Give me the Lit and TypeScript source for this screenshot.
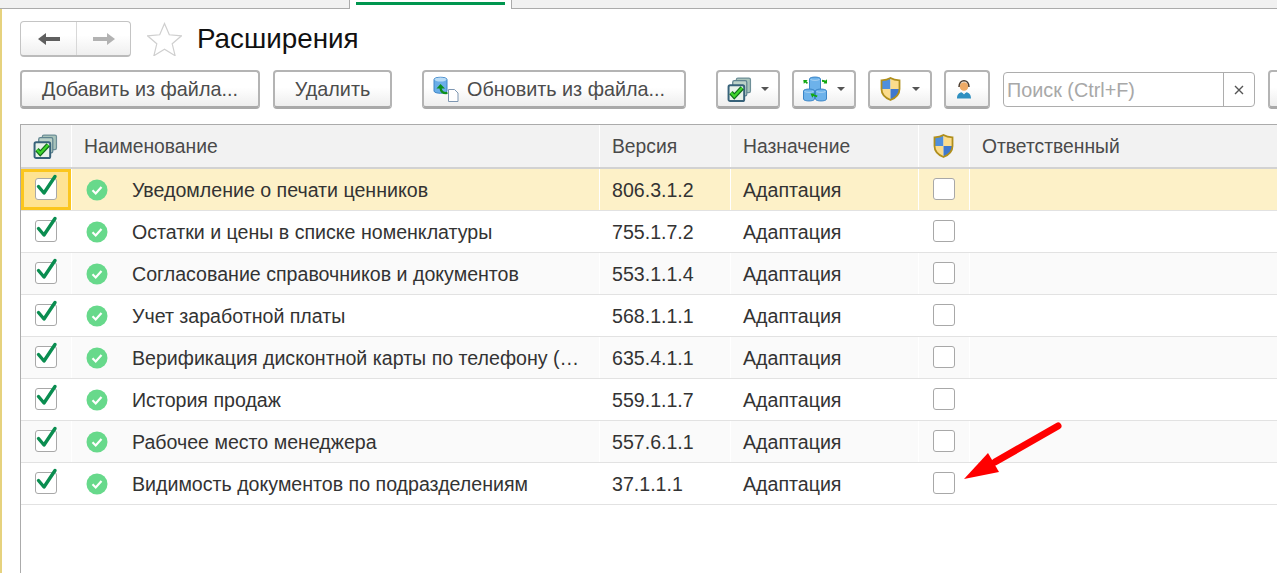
import { LitElement, html, css } from "lit";
import { customElement } from "lit/decorators.js";

const caret = html`<span class="caret"></span>`;

const stackIcon = (s = 25) => html`<svg width=${s} height=${s} viewBox="0 0 24 24">
  <rect x="9" y="1" width="13.500" height="14" rx="1.500" fill="#a9c4bb" stroke="#6e8f98" stroke-width="1.200"/>
  <rect x="5.500" y="3.500" width="13.500" height="14.500" rx="1.500" fill="#bcd2c8" stroke="#5f8490" stroke-width="1.200"/>
  <rect x="1.500" y="8" width="15" height="15" rx="1.500" fill="#e8f2ea" stroke="#37627a" stroke-width="1.900"/>
  <path d="M3.800 15l3.200 3.600 7.600-8.200" fill="none" stroke="#0f6d1a" stroke-width="4.400"/>
  <path d="M3.800 15l3.200 3.600 7.600-8.200" fill="none" stroke="#3fd52c" stroke-width="2.200"/>
</svg>`;

const shieldPath = "M10.500 1C7.500 3 4.500 3.300 1.500 3.300V12c0 5 3.500 8.800 9 11 5.500-2.200 9-6 9-11V3.300C16.500 3.300 13.500 3 10.500 1z";
const shieldIcon = (id: string) => html`<svg width="21" height="24" viewBox="0 0 21 24">
  <defs><clipPath id=${id}><path d=${shieldPath}/></clipPath></defs>
  <g clip-path="url(#${id})">
    <rect width="10.500" height="12" fill="#4f8fdc"/><rect x="10.500" width="10.500" height="12" fill="#fbdc8c"/>
    <rect y="12" width="10.500" height="12" fill="#fbdc8c"/><rect x="10.500" y="12" width="10.500" height="12" fill="#3f78cf"/>
  </g>
  <path d=${shieldPath} fill="none" stroke="#b08f1c" stroke-width="1.800"/>
</svg>`;

const dbIcon = html`<svg width="25" height="26" viewBox="0 0 25 26">
  <g fill="#6db2ea" stroke="#3c86c8" stroke-width="1">
    <path d="M6.500 3c0-2.600 11-2.600 11 0v10c0 2.600-11 2.600-11 0z"/>
    <path d="M.5 15c0-2.600 11-2.600 11 0v8c0 2.600-11 2.600-11 0z"/>
    <path d="M12.500 15c0-2.600 11-2.600 11 0v8c0 2.600-11 2.600-11 0z"/>
  </g>
  <g fill="none" stroke="#fff" stroke-width=".8" opacity=".55">
    <path d="M7.500 3.500c2 1.100 7 1.100 9 0M1.500 15.500c2 1.100 7 1.100 9 0M13.500 15.500c2 1.100 7 1.100 9 0"/>
  </g>
  <g fill="#12a812">
    <path d="M.3 4h4.400L3.400 5.300l1.600 1.500-1.100 1.100-1.600-1.500L.8 7.800z"/>
    <path d="M24 7.500V3.300l-1.400 1.300-3.600-.8v2l2.300.5-.7 1.200z"/>
    <path d="M7.500 17.500h4.300l-.9 1 3.600 1.100-.6 1.600-3.500-1.200-1.100 1.700z"/>
  </g>
</svg>`;

const personIcon = html`<svg class="person" width="16" height="20" viewBox="0 0 16 20">
  <path d="M1 19.500c0-4 1.700-5.500 4.500-6.300L8 15l2.500-1.800c2.800.8 4.500 2.300 4.500 6.300z" fill="#2e8fc0"/>
  <path d="M6.500 12.500h3L8 15.500z" fill="#f4f4f4"/>
  <circle cx="8" cy="7.500" r="4.300" fill="#eeaa66"/>
  <path d="M3 8c0-8.500 10-8.500 10 0" fill="none" stroke="#4a3a2c" stroke-width="1.500"/>
</svg>`;

const updateIcon = html`<svg width="26" height="26" viewBox="0 0 26 26">
  <path d="M1 3.500C1 .5 14 .5 14 3.500v11.500c0 3-13 3-13 0z" fill="#6aaee8" stroke="#3f86c8"/>
  <ellipse cx="7.500" cy="3.500" rx="6" ry="2" fill="#b9dcf6"/>
  <path d="M15.500 13.500h6l3.500 3.500v8.500h-9.500z" fill="#fff" stroke="#7e97b2"/>
  <path d="M14.500 17c-4 .5-6.500-1-7-5" fill="none" stroke="#0c8f1c" stroke-width="2.200"/>
  <path d="M3.500 12.500l4-4.500 4.500 4.500z" fill="#0c8f1c"/>
</svg>`;

const checkMark = html`<svg class="tick" width="26" height="26" viewBox="0 0 26 26">
  <path d="M4.500 14.500l5.500 6.500L21 4.500" fill="none" stroke="#0a8d50" stroke-width="3.400" stroke-linecap="round" stroke-linejoin="round"/>
</svg>`;

const statusIcon = html`<svg class="status" width="22" height="22" viewBox="0 0 22 22">
  <circle cx="11" cy="11" r="10.500" fill="#67d98b"/>
  <path d="M6.500 11.300l3.200 3.200 5.800-6.500" fill="none" stroke="#fff" stroke-width="2.200"/>
</svg>`;

const rows = [
  ["Уведомление о печати ценников", "806.3.1.2"],
  ["Остатки и цены в списке номенклатуры", "755.1.7.2"],
  ["Согласование справочников и документов", "553.1.1.4"],
  ["Учет заработной платы", "568.1.1.1"],
  ["Верификация дисконтной карты по телефону (…", "635.4.1.1"],
  ["История продаж", "559.1.1.7"],
  ["Рабочее место менеджера", "557.6.1.1"],
  ["Видимость документов по подразделениям", "37.1.1.1"],
];

@customElement("app-root")
export class AppRoot extends LitElement {
  static styles = css`
    :host {
      display: block;
      position: relative;
      width: 1277px;
      height: 573px;
      overflow: hidden;
      background: #fff;
      font-family: "Liberation Sans", Arial, sans-serif;
      color: #333;
    }
    * { box-sizing: border-box; }
    .tabs {
      height: 9px;
      background: #f1f1f1;
      border-bottom: 1px solid #ababab;
      padding-left: 349px;
    }
    .tab {
      width: 163px;
      height: 9px;
      background: #fff;
      border: 1px solid #ababab;
      border-width: 0 1px;
      padding: 2px 6px 0 6px;
    }
    .tab i { display: block; height: 3px; background: #00964f; }
    .main {
      height: 564px;
      border-left: 2px solid #e6d27e;
      padding: 12px 0 0 18px;
      display: flex;
      flex-direction: column;
    }
    .head { display: flex; align-items: center; height: 36px; }
    .nav {
      width: 111px;
      height: 36px;
      border: 1px solid #c4c4c4;
      border-bottom: 2px solid #bbb;
      border-radius: 4px;
      background: linear-gradient(#fff 40%, #efefef);
      display: flex;
    }
    .nav span { flex: 1; display: flex; align-items: center; justify-content: center; padding-top: 1px; }
    .nav span:first-child { border-right: 1px solid #d8d8d8; width: 56px; flex: none; }
    .star { margin: 0 15px 0 16px; display: block; }
    h1 { margin: 0; font-size: 27.800px; font-weight: 400; color: #111; }
    .toolbar { display: flex; align-items: flex-start; margin-top: 13px; height: 40px; }
    .btn {
      height: 39px;
      border: 2px solid #b4b4b4;
      border-bottom: 3px solid #a9a9a9;
      border-radius: 4px;
      background: linear-gradient(#fff 45%, #eeeeee);
      display: flex;
      align-items: center;
      justify-content: center;
      font-size: 19.800px;
      color: #4c4c4c;
      flex: none;
    }
    .btn.add { width: 240px; }
    .btn.del { width: 119px; margin-left: 13px; }
    .btn.upd { width: 264px; margin-left: 30px; justify-content: flex-start; padding-left: 9px; gap: 8px; }
    .btn.ic { width: 64px; gap: 9px; justify-content: flex-start; padding-left: 9px; }
    .btn.ic.first { margin-left: 30px; }
    .btn.ic.next { margin-left: 12px; }
    .btn.ic.shield { padding-left: 10px; gap: 11px; }
    .btn.solo { width: 46px; margin-left: 12px; justify-content: flex-start; padding-left: 10px; }
    .caret { width: 0; height: 0; border: 4px solid transparent; border-top: 4px solid #555; border-bottom: 0; }
    .search {
      width: 252px;
      height: 35px;
      margin: 2px 0 0 13px;
      border: 1px solid #adadad;
      border-radius: 4px;
      display: flex;
      flex: none;
      font-size: 19.800px;
      background: #fff;
    }
    .search .ph { flex: 1; color: #a8a8a8; padding-left: 3px; line-height: 34px; }
    .search .x { width: 31px; border-left: 1px solid #adadad; display: flex; align-items: center; justify-content: center; }
    .btn.tail { width: 46px; margin-left: 13px; }
    .table { margin-top: 14px; width: 1257px; border-left: 1px solid #ababab; flex: 1; }
    .hdr, .row {
      display: grid;
      grid-template-columns: 51px 528px 131px 188px 51px 1fr;
    }
    .hdr {
      height: 45px;
      background: #f2f2f2;
      border-top: 1px solid #ababab;
      border-bottom: 2px solid #d2d2d2;
      font-size: 19.300px;
      color: #4a4a4a;
    }
    .hdr > div {
      border-right: 1px solid #fff;
      display: flex;
      align-items: center;
      padding: 2px 0 0 12px;
    }
    .hdr > div:last-child { border-right: 0; }
    .hdr > div.ctr { justify-content: center; padding: 0 1px 0 0; }
    .row {
      height: 42px;
      border-bottom: 1px solid #e2e2e2;
      font-size: 19.600px;
      color: #333;
    }
    .row.alt { background: #fafafa; }
    .row.cur { background: #fdf1c8; }
    .row > div { border-right: 1px solid #fff; display: flex; align-items: center; padding: 1px 0 0 12px; white-space: nowrap; overflow: hidden; }
    .row > div:last-child { border-right: 0; }
    .row:not(.cur):not(.alt) > div { border-right-color: transparent; }
    .row > div.name { padding-left: 14px; gap: 24px; }
    .row > div.chk { padding: 9px 0 0 14px; position: relative; overflow: visible; align-items: flex-start; }
    .row.cur > div.chk { background: #fee393; box-shadow: inset 0 0 0 3px #fbc61e; }
    .row > div.box { padding: 9px 0 0 14px; align-items: flex-start; }
    .cb {
      width: 22px;
      height: 22px;
      background: #fff;
      border: 1px solid #a8a8a8;
      border-radius: 3px;
      display: block;
      flex: none;
    }
    .tick { position: absolute; left: 13px; top: 3px; }
    .arrow { position: absolute; left: 955px; top: 415px; pointer-events: none; }
  `;

  render() {
    return html`
      <div class="tabs"><div class="tab"><i></i></div></div>
      <div class="main">
        <div class="head">
          <div class="nav">
            <span><svg width="22" height="14" viewBox="0 0 22 14"><path d="M0 7l8-6v4h14v4H8v4z" fill="#5f5f5f"/></svg></span>
            <span><svg width="22" height="14" viewBox="0 0 22 14"><path d="M22 7l-8-6v4H0v4h14v4z" fill="#b2b2b2"/></svg></span>
          </div>
          <svg class="star" width="35" height="34" viewBox="0 0 35 34"><path d="M17.500 1.500l4.800 11.300 12.200 1-9.300 8 2.900 11.900-10.600-6.400-10.600 6.400 2.900-11.900-9.300-8 12.200-1z" fill="#fff" stroke="#cfcfcf" stroke-width="1.200"/></svg>
          <h1>Расширения</h1>
        </div>
        <div class="toolbar">
          <div class="btn add">Добавить из файла...</div>
          <div class="btn del">Удалить</div>
          <div class="btn upd">${updateIcon}<span>Обновить из файла...</span></div>
          <div class="btn ic first">${stackIcon()}${caret}</div>
          <div class="btn ic next">${dbIcon}${caret}</div>
          <div class="btn ic next shield">${shieldIcon("s1")}${caret}</div>
          <div class="btn solo">${personIcon}</div>
          <div class="search"><div class="ph">Поиск (Ctrl+F)</div><div class="x"><svg width="10" height="10" viewBox="0 0 10 10"><path d="M1 1l8 8M9 1l-8 8" stroke="#555" stroke-width="1.400"/></svg></div></div>
          <div class="btn tail"></div>
        </div>
        <div class="table">
          <div class="hdr">
            <div class="ctr">${stackIcon()}</div>
            <div>Наименование</div>
            <div>Версия</div>
            <div>Назначение</div>
            <div class="ctr">${shieldIcon("s2")}</div>
            <div>Ответственный</div>
          </div>
          ${rows.map(([name, ver], i) => html`
            <div class="row ${i === 0 ? "cur" : i % 2 === 0 ? "alt" : ""}">
              <div class="chk"><span class="cb"></span>${checkMark}</div>
              <div class="name">${statusIcon}<span>${name}</span></div>
              <div>${ver}</div>
              <div>Адаптация</div>
              <div class="box"><span class="cb"></span></div>
              <div></div>
            </div>`)}
        </div>
      </div>
      <svg class="arrow" width="115" height="75" viewBox="0 0 115 75">
        <path d="M103 11L40 47" stroke="#f00" stroke-width="7" stroke-linecap="round"/>
        <path d="M9 64l24-26 11 19z" fill="#f00"/>
      </svg>
    `;
  }
}
